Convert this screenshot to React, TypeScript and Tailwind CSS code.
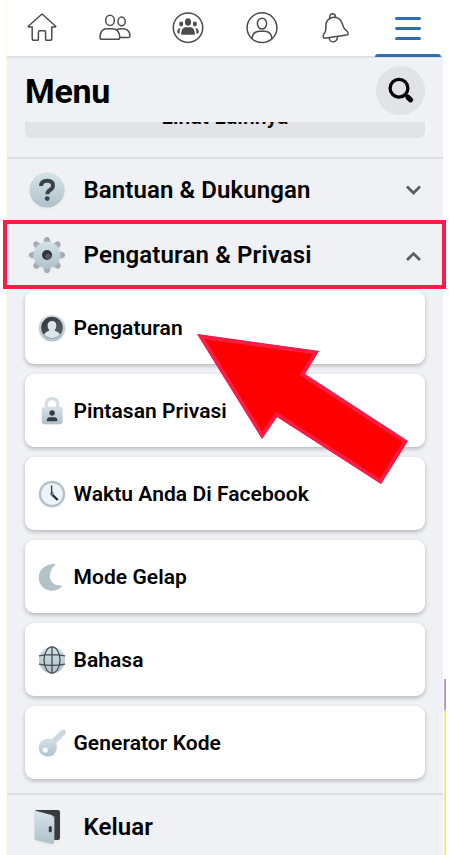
import React from 'react';

const steel = 'url(#steel)';

function Defs() {
  return (
    <svg className="absolute h-0 w-0" aria-hidden="true">
      <defs>
        <linearGradient id="steel" x1="0" y1="0" x2="0" y2="1">
          <stop offset="0" stopColor="#d5e3e9" />
          <stop offset="1" stopColor="#b0c1ca" />
        </linearGradient>
        <linearGradient id="dark" x1="0" y1="0" x2="1" y2="1">
          <stop offset="0" stopColor="#2f3338" />
          <stop offset="1" stopColor="#62676c" />
        </linearGradient>
        <linearGradient id="teeth" x1="0" y1="0" x2="0" y2="1">
          <stop offset="0" stopColor="#97a2aa" />
          <stop offset="1" stopColor="#b4c3cb" />
        </linearGradient>
      </defs>
    </svg>
  );
}

function TopBar() {
  const line = { fill: 'none', stroke: '#4c4c4e', strokeWidth: 1.5, strokeLinejoin: 'round' as const, strokeLinecap: 'round' as const };
  return (
    <nav className="grid h-[58px] shrink-0 grid-cols-[69px_78px_68px_79px_69px_73px] border-b-2 border-[#e0e1e4] bg-white">
      <div className="flex justify-center pt-3">
        <svg width="32" height="32" viewBox="0 0 32 32" {...line}>
          <path d="M16 2 L2.3 14.2 Q2 15 3 15 L6.2 15 V26.5 Q6.2 28.3 8 28.3 H11.6 Q12.4 28.3 12.4 27.5 V20 Q12.4 18.8 13.6 18.8 H18.4 Q19.6 18.8 19.6 20 V27.5 Q19.6 28.3 20.4 28.3 H24 Q25.8 28.3 25.8 26.5 V15 H29 Q30 15 29.7 14.2 Z" />
        </svg>
      </div>
      <div className="flex justify-center pt-3">
        <svg width="34" height="32" viewBox="0 0 34 32" {...line}>
          <ellipse cx="12" cy="8.4" rx="4.3" ry="5.1" />
          <ellipse cx="23.6" cy="9.4" rx="3.6" ry="4.3" />
          <path d="M3.8 27.3 Q2 27.3 2 25.5 V24.5 Q2.5 16.7 9 16.7 H14 Q21 16.7 21.7 24.5 V25.5 Q21.7 27.3 19.9 27.3 Z M19.7 17.3 Q21 16.7 23 16.7 H25 Q31 16.7 32 23 V24 Q32 25.6 30.3 25.6 H21.7" />
        </svg>
      </div>
      <div className="flex justify-center pt-3">
        <svg width="32" height="32" viewBox="0 0 32 32">
          <circle cx="16" cy="15.7" r="14.7" {...line} />
          <g fill="#4c4c4e">
            <ellipse cx="16" cy="10" rx="3.1" ry="3.8" />
            <ellipse cx="9.2" cy="12" rx="2" ry="2.4" />
            <ellipse cx="22.8" cy="12" rx="2" ry="2.4" />
            <path d="M9.2 22.8 V21 Q9.7 15.3 14 15.3 H18 Q22.3 15.3 22.8 21 V22.8 Z" />
            <path d="M8.6 16 Q5.2 16.5 5.2 20 Q5.2 21.5 7.6 22 Q7.3 18.5 8.6 16 Z M23.4 16 Q26.8 16.5 26.8 20 Q26.8 21.5 24.4 22 Q24.7 18.5 23.4 16 Z" />
          </g>
        </svg>
      </div>
      <div className="flex justify-center pt-3">
        <svg width="32" height="32" viewBox="0 0 32 32" {...line}>
          <circle cx="16" cy="15.7" r="14.9" />
          <ellipse cx="16" cy="11.6" rx="4.6" ry="5.4" />
          <path d="M6 26.5 Q6.8 19.3 13.5 19.3 H18.5 Q25.2 19.3 26 26.5" />
        </svg>
      </div>
      <div className="flex justify-center pt-3">
        <svg width="32" height="32" viewBox="0 0 32 32" {...line}>
          <path d="M4.2 26.2 Q3 26 3.2 24 Q3.2 22.3 4.9 20.5 Q6 18.8 6 12.5 Q6.5 7 12.3 5.5 Q19.8 4.4 22.2 11.5 C23.5 16 24.2 17.2 26.3 18.5 Q27.9 19.7 28 21.5 Q28.2 22.9 26.7 23.1 Z" />
          <path d="M9.8 6.3 Q9 2 12.5 1.8 Q15.3 1.8 15.6 5.4 M9.2 26 Q9.8 30 13.5 29.8 Q17.2 29.5 17.5 24.8" />
        </svg>
      </div>
      <div className="-mb-0.5 ml-[5px] flex w-[66px] flex-col items-center gap-[7.5px] pt-[17px]">
        <span className="h-[2.5px] w-[26px] shrink-0 rounded-full bg-[#2f6cb5]" />
        <span className="h-[2.5px] w-[26px] shrink-0 rounded-full bg-[#2f6cb5]" />
        <span className="h-[2.5px] w-[26px] shrink-0 rounded-full bg-[#2f6cb5]" />
        <span className="mb-px mt-auto h-[3px] w-full rounded-t-sm bg-[#2f6cb5]" />
      </div>
    </nav>
  );
}

function QuestionIcon() {
  return (
    <svg width="38" height="38" viewBox="0 0 38 38" className="drop-shadow-xs">
      <circle cx="19" cy="19" r="17.5" fill={steel} />
      <path d="M13 15 Q13.3 9.8 19.2 9.8 Q25 9.9 25 14.7 Q25 17.2 22 19 Q19.3 20.7 19.3 23.3" fill="none" stroke="#3e4247" strokeWidth="3.9" />
      <circle cx="19.2" cy="27.6" r="2.4" fill="#3e4247" />
    </svg>
  );
}

function GearIcon() {
  return (
    <svg width="38" height="38" viewBox="0 0 38 38" className="drop-shadow-xs">
      {[0, 45, 90, 135, 180, 225, 270, 315].map((a) => (
        <path key={a} transform={`rotate(${a} 19 19)`} d="M15 8 L16.2 3 Q16.7 1 19 1 Q21.3 1 21.8 3 L23 8 Z" fill="url(#teeth)" />
      ))}
      <circle cx="19" cy="19" r="13.2" fill={steel} />
      <circle cx="19" cy="19" r="5" fill="#30353a" />
      <circle cx="20" cy="20.3" r="2.7" fill="#555b60" />
    </svg>
  );
}

function DoorIcon() {
  return (
    <svg width="38" height="38" viewBox="0 0 38 38" className="drop-shadow-xs">
      <path d="M7 3.5 Q7 2 9 2 H30 Q32 2 32 4 V30 Q32 32 30 32 H24 Z" fill="#383c40" />
      <path d="M8.5 3 L23.5 7 Q26 7.8 26 10.2 V34 Q26 36.5 23.5 36 L8.5 32.3 Q6.5 31.7 6.5 29.7 V4.4 Q6.5 2.5 8.5 3 Z" fill={steel} />
      <rect x="20.8" y="18.3" width="3" height="6" rx="1" fill="#34383c" />
      <path d="M26.5 8 V32" stroke="#6b7276" strokeWidth="1" />
    </svg>
  );
}

function ProfileIcon() {
  return (
    <svg width="28" height="28" viewBox="0 0 28 28" className="drop-shadow-xs">
      <circle cx="14" cy="14" r="13.3" fill={steel} />
      <circle cx="14" cy="13.6" r="10.8" fill="url(#dark)" />
      <path d="M5.9 20.8 Q7.2 17.9 11.4 16.6 Q9.6 14.5 9.6 11.6 Q9.8 7 14 7 Q18.2 7 18.4 11.6 Q18.4 14.5 16.6 16.6 Q20.8 17.9 22.1 20.8 Q14 28 5.9 20.8 Z" fill="#dbe6eb" />
    </svg>
  );
}

function LockIcon() {
  return (
    <svg width="28" height="28" viewBox="0 0 28 28" className="drop-shadow-xs">
      <path d="M8.3 11 V7.2 Q8.3 1.5 14 1.5 Q19.7 1.5 19.7 7.2 V11" fill="none" stroke="#d3dde2" strokeWidth="3" />
      <rect x="3.8" y="9.8" width="20.8" height="17.4" rx="3" fill={steel} />
      <circle cx="14.1" cy="16" r="2.7" fill="#363b40" />
      <path d="M8.8 24.2 Q8.5 20.3 12 20.3 H16.2 Q19.7 20.3 19.4 24.2 Z" fill="#363b40" />
    </svg>
  );
}

function ClockIcon() {
  return (
    <svg width="28" height="28" viewBox="0 0 28 28" className="drop-shadow-xs">
      <circle cx="14" cy="14" r="12" fill="#edf3f6" stroke="#b3c1c8" strokeWidth="2.4" />
      <circle cx="14" cy="14" r="2.2" fill="#9dabb3" />
      <path d="M13.7 14.5 L13.6 5.5" stroke="#33383c" strokeWidth="1.3" />
      <path d="M14.5 15 L19.7 20" stroke="#24282b" strokeWidth="2.4" />
    </svg>
  );
}

function MoonIcon() {
  return (
    <svg width="28" height="28" viewBox="0 0 28 28">
      <path d="M17.5 .8 C8.5 .5 .8 6.2 .8 14.4 C.8 22.5 7 27.7 14 27.7 C18.3 27.7 21.7 26 24 23 C24 22.4 23.5 22.3 22.7 22.5 C10.5 22.8 8.5 9.5 17.3 1.8 C18 1.2 18 1 17.5 .8 Z" fill="#b3c1c9" />
    </svg>
  );
}

function GlobeIcon() {
  return (
    <svg width="28" height="28" viewBox="0 0 28 28">
      <circle cx="14" cy="14" r="13.3" fill={steel} />
      <g fill="none" stroke="#454c52" strokeWidth="1.3">
        <path d="M14 .7 V27.3 M1 9.8 Q14 7.3 27 9.8 M1 18.2 Q14 20.7 27 18.2" />
        <ellipse cx="14" cy="14" rx="8" ry="13.1" />
      </g>
    </svg>
  );
}

function KeyIcon() {
  return (
    <svg width="28" height="28" viewBox="0 0 28 28" className="drop-shadow-xs">
      <path d="M12.5 11.5 L23 1.7 Q24.3 .6 26.2 .8 Q27.5 1 27.6 2.6 L27.6 5.4 L24.7 6.6 L23.7 9.5 L21 10.5 L17.5 15 Z" fill="#ccd8de" />
      <path d="M10 9.4 Q14 9 17.3 12.6 Q19.7 15.5 18.4 20.5 Q16.5 27.4 9.7 27.4 Q1 26.8 .8 18.5 Q1 10.5 10 9.4 Z" fill={steel} />
      <circle cx="7.2" cy="21" r="2.6" fill="#fff" />
    </svg>
  );
}

const cards = [
  { label: 'Pengaturan', Icon: ProfileIcon },
  { label: 'Pintasan Privasi', Icon: LockIcon },
  { label: 'Waktu Anda Di Facebook', Icon: ClockIcon },
  { label: 'Mode Gelap', Icon: MoonIcon },
  { label: 'Bahasa', Icon: GlobeIcon },
  { label: 'Generator Kode', Icon: KeyIcon },
];

function Chevron({ up = false }: { up?: boolean }) {
  return (
    <svg width="16" height="12" viewBox="0 0 16 12" fill="none" stroke="#5c5e61" strokeWidth="2.8">
      <path d={up ? 'M2 11 L8.5 4.6 L15 11' : 'M2 2.6 L8.5 9 L15 2.6'} />
    </svg>
  );
}

function Arrow() {
  const pts = '197,334 319,351 305,374 408,441 381,484 277,417 262,439';
  return (
    <svg className="pointer-events-none absolute left-0 top-0" width="450" height="855" viewBox="0 0 450 855">
      <clipPath id="arrow"><polygon points={pts} /></clipPath>
      <polygon points={pts} fill="#fe0000" stroke="#fb1c46" strokeWidth="8" clipPath="url(#arrow)" />
    </svg>
  );
}

export default function App() {
  return (
    <div className="relative flex h-[855px] w-[450px] overflow-hidden bg-white font-['Roboto','Liberation_Sans',sans-serif] text-black">
      <Defs />
      <div className="ml-[5px] w-0.5 shrink-0 bg-[#fdfde9]" />
      <main className="flex w-[436px] shrink-0 flex-col bg-[#f0f1f4]">
        <TopBar />
        <header className="flex h-16 shrink-0 items-center justify-between px-[18px]">
          <h1 className="pt-0.5 text-[34px] font-bold leading-none tracking-[-0.3px]">Menu</h1>
          <div className="flex size-[49px] items-center justify-center rounded-full bg-[#e2e3e7]">
            <svg width="28" height="28" viewBox="0 0 28 28" fill="none" stroke="#050505">
              <circle cx="12" cy="12.2" r="8.9" strokeWidth="3.3" />
              <path d="M18.5 18.8 L20.5 20.8" strokeWidth="3" />
              <path d="M21 21.3 L23.6 23.8" strokeWidth="5.2" strokeLinecap="round" />
            </svg>
          </div>
        </header>
        <div className="mx-[18px] flex h-4 shrink-0 items-end justify-center overflow-hidden rounded-b-md bg-[#e2e3e7]">
          <span className="mb-[9px] text-[21px] font-semibold leading-6 tracking-[0.15px]">Lihat Lainnya</span>
        </div>
        <section className="mt-[19px] flex h-[63px] shrink-0 items-center border-t-2 border-[#dcdde1] pl-[21px] pr-[22px]">
          <QuestionIcon />
          <span className="ml-[17.5px] flex-1 whitespace-nowrap text-[24px] font-semibold leading-none tracking-[0.1px]">Bantuan &amp; Dukungan</span>
          <Chevron />
        </section>
        <section className="-ml-1 flex h-[69px] w-[443px] shrink-0 items-center border-[4.5px] border-[#fb1c46] pl-[21px] pr-[21px]">
          <GearIcon />
          <span className="ml-[17.5px] flex-1 whitespace-nowrap text-[24px] font-semibold leading-none tracking-[0.15px]">Pengaturan &amp; Privasi</span>
          <Chevron up />
        </section>
        <ul className="mx-[18px] mt-0.5 flex shrink-0 flex-col gap-2.5">
          {cards.map(({ label, Icon }) => (
            <li key={label} className="flex h-[73px] items-center rounded-[9px] bg-white pl-[13px] pt-px shadow-[0_2px_4px_rgba(0,0,0,0.24)]">
              <Icon />
              <span className="ml-[7.5px] whitespace-nowrap text-[21px] font-semibold leading-none tracking-[0.06px]">{label}</span>
            </li>
          ))}
        </ul>
        <footer className="mt-3.5 flex h-[61px] shrink-0 items-center border-t-2 border-[#dcdde1] pl-[21px] pt-1">
          <DoorIcon />
          <span className="ml-[17.5px] text-[24px] font-semibold leading-none tracking-[0.1px]">Keluar</span>
        </footer>
      </main>
      <div className="ml-px flex w-0.5 shrink-0 flex-col pt-[679px]">
        <span className="h-[31px] bg-[#b59acb]" />
        <span className="flex-1 bg-[#f0e88c]" />
      </div>
      <Arrow />
    </div>
  );
}
